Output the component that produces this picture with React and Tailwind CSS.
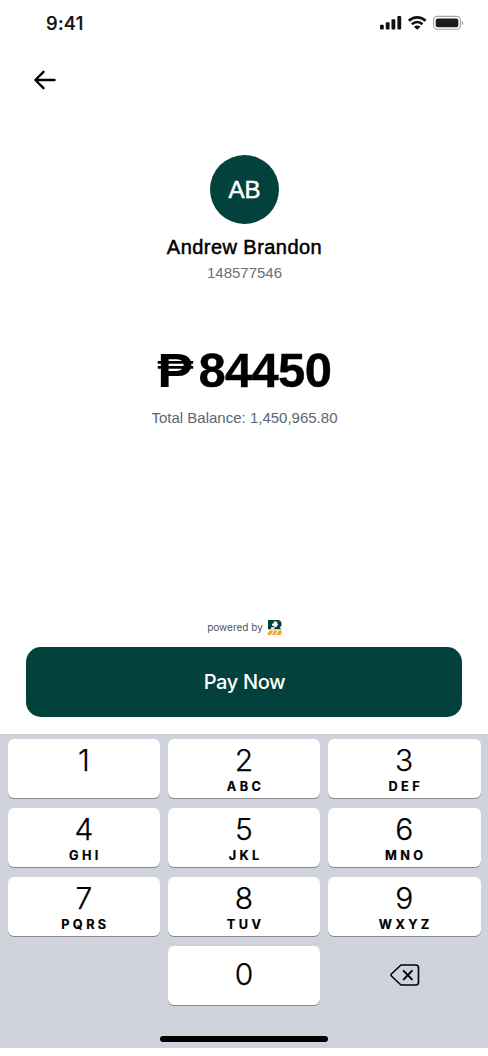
const ROWS = [
  [["1", ""], ["2", "ABC"], ["3", "DEF"]],
  [["4", "GHI"], ["5", "JKL"], ["6", "MNO"]],
  [["7", "PQRS"], ["8", "TUV"], ["9", "WXYZ"]],
];

function StatusBar() {
  return (
    <div className="flex h-[46px] items-center justify-between pl-[46px] pr-[24px]">
      <span className="font-['Inter',sans-serif] text-[18.5px] leading-6 font-medium tracking-[0.3px] text-[#111] [-webkit-text-stroke:0.2px]">9:41</span>
      <svg width="85" height="16" viewBox="0 0 85 16">
        <g fill="#111">
          <rect x="1" y="9.8" width="3.8" height="4.7" rx="1" />
          <rect x="6.8" y="7.3" width="3.8" height="7.2" rx="1" />
          <rect x="12.5" y="4.2" width="3.8" height="10.3" rx="1" />
          <rect x="18.4" y="1" width="3.8" height="13.5" rx="1" />
          <path d="M38.2 14.8 L34.9 11.7 C36.7 10.1 39.7 10.1 41.5 11.7Z" />
        </g>
        <g fill="none" stroke="#111" strokeWidth="2.6">
          <path d="M29.8 5.8 C34.6 1.2 41.8 1.2 46.6 5.8" />
          <path d="M32.9 9.2 C35.9 6.3 40.5 6.3 43.5 9.2" />
        </g>
        <rect x="54.6" y="1.4" width="26.8" height="12.9" rx="3.8" fill="none" stroke="#a3a3a3" strokeWidth="1.1" />
        <rect x="56.7" y="3.4" width="22.6" height="8.9" rx="2" fill="#1c1c1c" />
        <path d="M82.8 5.7 C84.6 6.5 84.6 9.3 82.8 10.1Z" fill="#999" />
      </svg>
    </div>
  );
}

function BrandMark() {
  return (
    <svg className="mt-px" width="16" height="17" viewBox="0 0 16 17">
      <path d="M1 1H10.5C13.4 1 14.6 2.8 14.6 5C14.6 6.8 13.8 7.8 12.7 8.4L14.4 10.2H1Z" fill="#03423c" />
      <path d="M5 5.1L6.6 4.3L6.8 2.8L8.5 2.3L10.2 3L10.3 4.5L11.3 5.5L10.1 6.6L9.7 8H7.6L7.3 7.2L5.4 7.1ZM4 8.6L7.6 8V9.4L6 10.2H4Z" fill="#fff" />
      <path d="M2.8 11.6H6.4L3.7 16H0.6V14ZM7.3 11.6H10.4L8 16H4.9ZM11.4 11.6H14.8V14L13.4 16H9.2Z" fill="#f9a52b" />
    </svg>
  );
}

function Key({ digit, letters }) {
  return (
    <button className="flex h-[59px] flex-col items-center rounded-[6px] bg-white font-['Inter',sans-serif] text-black shadow-[0_1px_0_#888a8e]">
      <span className={digit === "0" ? "mt-[10px] text-[30px] leading-9 font-light [-webkit-text-stroke:0.25px]" : "mt-[3px] text-[30px] leading-9 font-light [-webkit-text-stroke:0.25px]"}>{digit}</span>
      {letters && <span className="mt-px pl-[3.2px] text-[12.7px] leading-4 font-bold tracking-[3.4px] [-webkit-text-stroke:0.2px]">{letters}</span>}
    </button>
  );
}

function Keypad() {
  return (
    <div className="flex h-[314px] flex-col bg-[#d0d3db] px-[7.5px] pt-[5px]">
      <div className="grid grid-cols-3 gap-x-[7.5px] gap-y-[9.9px]">
        {ROWS.flat().map(([digit, letters]) => (
          <Key key={digit} digit={digit} letters={letters} />
        ))}
        <div />
        <Key digit="0" letters="" />
        <div className="flex items-center justify-center pl-px">
          <svg width="30" height="24" viewBox="0 0 30 24" fill="none" stroke="#000" strokeWidth="1.6">
            <path d="M11 2H25.8Q28.5 2 28.5 4.7V19.3Q28.5 22 25.8 22H11L1.4 13Q.6 12 1.4 11Z" strokeLinejoin="round" />
            <path d="M13.7 7.9L21.9 16.4M21.9 7.9L13.7 16.4" strokeWidth="2" strokeLinecap="round" />
          </svg>
        </div>
      </div>
      <div className="mt-auto mb-[6px] h-[6px] w-[168px] self-center rounded-full bg-black" />
    </div>
  );
}

export default function App() {
  return (
    <div className="flex h-[1056px] w-[488px] flex-col bg-white font-['Liberation_Sans',Arial,sans-serif]">
      <StatusBar />
      <header className="flex h-[68px] items-center pl-[33px]">
        <svg width="24" height="22" viewBox="0 0 24 22" fill="none" stroke="#000" strokeWidth="2.4" strokeLinecap="round" strokeLinejoin="round">
          <path d="M21.5 11H2.5M10.5 2.8L2.3 11L10.5 19.2" />
        </svg>
      </header>
      <main className="flex h-[504px] flex-col items-center pt-[41px]">
        <div className="ml-px flex size-[69px] items-center justify-center rounded-full bg-[#03423c] text-[24px] text-white [-webkit-text-stroke:0.5px]">AB</div>
        <h1 className="mt-[11px] ml-px text-[20px] leading-6 tracking-[0.45px] text-black [-webkit-text-stroke:0.5px]">Andrew Brandon</h1>
        <p className="mt-[4px] ml-px text-[15px] leading-5 text-[#66707c]">148577546</p>
        <div className="mt-[59px] ml-[2px] flex h-[56px] items-center gap-[7px] text-[49px] leading-[56px] font-bold text-black">
          <span className="inline-block origin-center scale-x-110">₱</span>
          <span className="tracking-[-0.7px] [-webkit-text-stroke:0.4px]">84450</span>
        </div>
        <p className="mt-[10px] ml-px text-[15px] leading-5 text-[#5b6673]">Total Balance: 1,450,965.80</p>
      </main>
      <div className="ml-[2px] flex h-[29px] items-start justify-center gap-[4px]">
        <span className="font-['Inter',sans-serif] text-[10px] leading-[18px] text-[#4b5563]">powered by</span>
        <BrandMark />
      </div>
      <button className="mx-[26px] h-[70px] shrink-0 rounded-[15px] bg-[#03423c] pl-px font-['Inter',sans-serif] text-[20px] font-medium tracking-[-0.35px] text-white">Pay Now</button>
      <div className="mt-auto pb-[8px]">
        <Keypad />
      </div>
    </div>
  );
}
